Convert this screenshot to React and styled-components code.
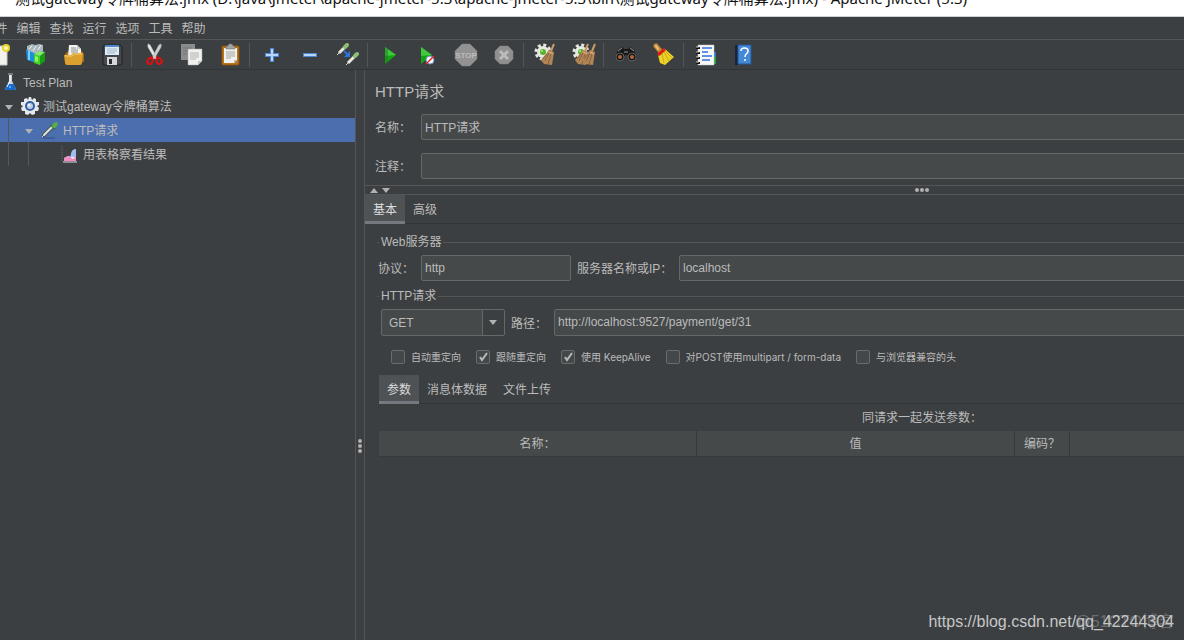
import React, { useState } from 'react';
import styled, { createGlobalStyle } from 'styled-components';

const GlobalStyle = createGlobalStyle`
    * {
        box-sizing: border-box;
    }

    body {
        margin: 0;
        background: #3c3f41;
        color: #bbbbbb;
        font: 12px/16px 'Liberation Sans', 'Noto Sans CJK SC', sans-serif;
    }

    button,
    input,
    select {
        margin: 0;
        color: inherit;
        font: inherit;
    }
`;

const Window = styled.div`
    position: relative;
    display: flex;
    flex-direction: column;
    height: 100vh;
    overflow: hidden;
`;

const TitleBar = styled.header`
    display: flex;
    flex: none;
    align-items: flex-start;
    height: 17px;
    padding-left: 15px;
    overflow: hidden;
    background: #ffffff;
    border-bottom: 1px solid #d0d0d0;
    color: #111111;
    font: 15px/20px 'Noto Sans', 'Noto Sans CJK SC', sans-serif;
    white-space: nowrap;

    span {
        margin-top: -12px;
    }
`;

const MenuBar = styled.nav`
    display: flex;
    flex: none;
    height: 23px;
    margin-left: -21px;
    border-bottom: 1px solid #555555;
`;

const MenuButton = styled.button`
    width: 33px;
    padding: 1px 0 0;
    border: 0;
    background: none;
    white-space: nowrap;
`;

const ToolBar = styled.div`
    display: flex;
    flex: none;
    align-items: center;
    height: 30px;
    padding: 1px 8px 0 0;
    border-bottom: 1px solid #323537;
`;

const ToolGroup = styled.div`
    display: flex;
    flex: none;

    &:first-child {
        margin-left: -21px;
    }

    & + & {
        padding-left: 3px;
        border-left: 1px solid #515658;
    }
`;

const ToolButton = styled.button`
    display: flex;
    align-items: center;
    justify-content: center;
    width: 38px;
    height: 24px;
    padding: 0;
    border: 0;
    background: none;
`;

const Body = styled.div`
    display: flex;
    flex: none;
    height: calc(100% + 112px);
`;

const TreePane = styled.aside`
    flex: none;
    width: 355px;
`;

const TreeRow = styled.div`
    display: flex;
    align-items: center;
    height: 24px;
    padding-left: 1px;
    background: ${(props) => (props.$selected ? '#4b6eaf' : 'transparent')};
    white-space: nowrap;

    svg {
        flex: none;
    }
`;

const TreeGuide = styled.span`
    align-self: stretch;
    width: 20px;
    padding-left: 7px;

    &::before {
        content: '';
        display: block;
        width: 1px;
        height: 100%;
        background: #54585a;
    }
`;

const TreeToggle = styled.button`
    display: flex;
    align-items: center;
    width: 20px;
    height: 24px;
    padding: 2px 0 0 4px;
    border: 0;
    background: none;
`;

const TreeSpacer = styled.span`
    width: 20px;
`;

const TreeLabel = styled.span`
    margin-left: 4px;
    padding-top: 2px;
`;

const SplitBar = styled.div`
    display: flex;
    flex: none;
    align-items: center;
    justify-content: center;
    flex-direction: ${(props) => (props.$vertical ? 'column' : 'row')};
    width: ${(props) => (props.$vertical ? '10px' : 'auto')};
    height: ${(props) => (props.$vertical ? 'auto' : '10px')};
    border: solid #555555;
    border-width: ${(props) => (props.$vertical ? '0 1px' : '1px 0')};
    gap: 1px;
`;

const Dot = styled.span`
    width: 4px;
    height: 4px;
    border-radius: 50%;
    background: #afb1b3;
`;

const SplitArrows = styled.div`
    display: flex;
    flex: 1;
    gap: 4px;
    padding-left: 5px;
`;

const SplitEnd = styled.div`
    flex: 1;
`;

/* The editor runs past the right edge of the visible window area. */
const Editor = styled.main`
    flex: none;
    width: calc(100% - 76px);
`;

const ElementForm = styled.div`
    display: flex;
    flex-direction: column;
    gap: 13px;
    height: 115px;
    padding: 12px 0 0 10px;
`;

const ElementTitle = styled.h1`
    height: 19px;
    margin: 0;
    font-size: 15px;
    font-weight: 400;
    line-height: 19px;
`;

const FormRow = styled.div`
    display: flex;
    align-items: center;

    label {
        flex: none;
        width: ${(props) => props.$labelWidth || '46px'};
        padding-top: 2px;
        white-space: nowrap;
    }
`;

const TextInput = styled.input`
    flex: ${(props) => (props.$width ? 'none' : '1')};
    width: ${(props) => props.$width || 'auto'};
    min-width: 0;
    height: ${(props) => (props.$tall ? '27px' : '26px')};
    padding: 0 3px 1px;
    border: 1px solid #646867;
    border-radius: 2px;
    background: #45494a;
    outline: none;
`;

const TabList = styled.div`
    display: flex;
    height: 29px;
    border-bottom: 1px solid #333638;
`;

const Tab = styled.button`
    height: 29px;
    padding: 3px 8px 0;
    border: 0;
    border-bottom: 3px solid ${(props) => (props.$active ? '#747a80' : 'transparent')};
    background: ${(props) => (props.$active ? '#4e5254' : 'transparent')};
    color: ${(props) => (props.$active ? '#dddddd' : '#bbbbbb')};
    white-space: nowrap;
`;

const SamplerPanel = styled.div`
    padding: 10px 16px 0 12px;
`;

const Group = styled.section`
    margin-bottom: 7px;
`;

const GroupTitle = styled.h2`
    display: flex;
    align-items: center;
    gap: 2px;
    height: 16px;
    margin: 0 0 5px;
    font-size: 12px;
    font-weight: 400;

    &::before,
    &::after {
        content: '';
        width: 2px;
        height: 1px;
        background: #555555;
    }

    &::after {
        flex: 1;
    }
`;

const FieldLine = styled.div`
    display: flex;
    align-items: center;
    gap: 6px;
    padding-left: ${(props) => props.$indent};
`;

const GroupField = styled(FormRow)`
    flex: ${(props) => (props.$grow ? '1' : 'none')};
`;

const SelectBox = styled.div`
    position: relative;
    width: 124px;

    select {
        width: 100%;
        height: 27px;
        padding: 0 30px 0 7px;
        border: 1px solid #646867;
        border-radius: 2px;
        background: linear-gradient(to left, #3c3f41 21px, #646867 21px, #646867 22px, #45494a 22px);
        appearance: none;
        outline: none;
    }

    svg {
        position: absolute;
        top: 11px;
        right: 8px;
        pointer-events: none;
    }
`;

const CheckLine = styled.div`
    display: flex;
    gap: 15px;
    height: 14px;
    margin: 14px 0 11px 14px;
`;

const CheckLabel = styled.label`
    display: flex;
    align-items: center;
    gap: 6px;
    font-family: Inter, 'Noto Sans CJK SC', sans-serif;
    font-size: 10px;
    line-height: 14px;
    white-space: nowrap;
`;

const CheckBox = styled.span`
    position: relative;
    display: flex;

    input {
        width: 14px;
        height: 14px;
        border: 1px solid #6b6b6b;
        border-radius: 2px;
        background: #43494a;
        appearance: none;
    }

    svg {
        position: absolute;
        inset: 0;
        visibility: hidden;
        pointer-events: none;
    }

    input:checked + svg {
        visibility: visible;
    }
`;

const ParamsPanel = styled.div`
    padding-left: 2px;
`;

const ParamsTable = styled.table`
    width: 100%;
    border-spacing: 0;
    table-layout: fixed;

    caption {
        height: 27px;
        padding-left: 8px;
        line-height: 29px;
    }

    th {
        height: 26px;
        padding: 1px 0 0;
        border-right: 1px solid #36393b;
        border-bottom: 1px solid #36393b;
        background: #45494a;
        font-weight: 400;
    }
`;

const Watermark = styled.div`
    position: absolute;
    right: 10px;
    bottom: 8px;
    color: ${(props) => (props.$faint ? '#6a6d6f' : '#c6c7c8')};
    font-size: 16px;
    line-height: 20px;
    white-space: nowrap;
`;

const Icon = ({ size = 24, children }) => (
    <svg width={size} height={size} viewBox={`0 0 ${size} ${size}`} fill="none" aria-hidden="true">
        {children}
    </svg>
);

const ArrowIcon = ({ up }) => (
    <svg width="8" height="5" viewBox="0 0 8 5" aria-hidden="true">
        <path d={up ? 'M0 5 4 0l4 5z' : 'M0 0h8L4 5z'} fill="#afb1b3" />
    </svg>
);

const NewIcon = () => (
    <Icon>
        <path d="M4 3h17v19H4z" fill="#f1f1ee" stroke="#c9c9c4" />
        <circle cx="20" cy="5" r="3" fill="#fff8a8" stroke="#e6d432" strokeWidth="2" />
    </Icon>
);

const TemplatesIcon = () => (
    <Icon>
        <path d="M2 7l7-2 6 3v13L3 17z" fill="#1c8fd6" />
        <path d="M3 3l5-2 3 1 4-1 4 1v6l-7 3-9-4z" fill="#a9b8bf" />
        <path d="M5 6l3-3M9 8l3-5M14 7l3-5" stroke="#e9f1f4" />
        <path d="M5 8v9" stroke="#6fd0ff" strokeWidth="2" />
        <path d="M10 11l6 2v9l-6-2z" fill="#42d327" />
        <path d="M16 13l5-4v9l-5 4z" fill="#179c14" />
        <path d="M10 11l6-3 5 1-5 4z" fill="#86e96c" />
        <path d="M11 13l3 1v5l-3-1z" fill="#8af46e" />
    </Icon>
);

const OpenIcon = () => (
    <Icon>
        <path d="M3 11l3-3h14l2 3v8H3z" fill="#a26b10" />
        <path d="M7 2h8l4 4v8H6z" fill="#f2f2f0" />
        <path d="M9 5h5M9 7h7M9 9h7" stroke="#8e8e8e" />
        <path d="M15 2l4 4h-4z" fill="#c9c9c9" />
        <path d="M2 12h7l2-2h10l-1 10c0 1-1 2-2 2H5c-1 0-2-1-2-2z" fill="#dca02f" />
        <path d="M3 13h7l2-2h8" stroke="#f4cd77" />
    </Icon>
);

const SaveIcon = () => (
    <Icon>
        <path d="M3 3l1-1h16l2 2v17l-1 1H4l-1-1z" fill="#44484c" stroke="#1f2122" />
        <path d="M5 2h14v10H5z" fill="#dcebf8" />
        <path d="M5 2h14v2H5z" fill="#5288c7" />
        <path d="M7 6h10M7 8h10M7 10h8" stroke="#a6b8c8" />
        <path d="M7 14h10v8H7z" fill="#d6d7d8" />
        <path d="M9 16h3v5H9z" fill="#2b2d2f" />
    </Icon>
);

const CutIcon = () => (
    <Icon>
        <path d="M6 1l2 1 7 13-2 1L6 4z" fill="#e7e8e9" stroke="#cccfd0" strokeWidth=".7" />
        <path d="M19 1l-2 1-7 13 2 1 7-12z" fill="#cfd1d2" stroke="#b8bbbd" strokeWidth=".7" />
        <path d="M11 14l-2 1M14 14l2 1" stroke="#e01010" strokeWidth="2" />
        <ellipse cx="8" cy="18" rx="2.5" ry="3" stroke="#e01010" strokeWidth="2" transform="rotate(30 8 18)" />
        <ellipse cx="17" cy="18" rx="2.5" ry="3" stroke="#e01010" strokeWidth="2" transform="rotate(-30 17 18)" />
    </Icon>
);

const CopyIcon = () => (
    <Icon>
        <path d="M1 1h14v16H1z" fill="#8a8c8d" />
        <path d="M3 5h9M3 8h9M3 11h4" stroke="#707374" />
        <path d="M8 6h14v12l-4 4H8z" fill="#f0f0ee" stroke="#a8a8a4" strokeWidth=".5" />
        <path d="M10 10h9M10 12h9M10 14h9M10 16h6" stroke="#b2b2af" />
        <path d="M18 22v-4h4z" fill="#c2c2bf" />
    </Icon>
);

const PasteIcon = () => (
    <Icon>
        <rect x="4" y="3" width="17" height="19" rx="1" fill="#b9741c" stroke="#8a520c" />
        <path d="M6 5h13v12l-3 3H6z" fill="#f0f0ee" />
        <path d="M8 9h9M8 11h9M8 13h9M8 15h5" stroke="#a5a5a2" />
        <path d="M16 20v-3h3z" fill="#bcbcb8" />
        <path d="M8 6V3h2c0-3 5-3 5 0h2v3z" fill="#a3a5a3" stroke="#5d5f5e" strokeWidth=".5" />
    </Icon>
);

const AddIcon = () => (
    <Icon>
        <path d="M12 5v14M5 12h14" stroke="#4f86d2" strokeWidth="4" />
        <path d="M12 6v12M6 12h12" stroke="#b7d6f7" strokeWidth="2" />
    </Icon>
);

const RemoveIcon = () => (
    <Icon>
        <path d="M5 12h14" stroke="#4f86d2" strokeWidth="4" />
        <path d="M6 12h12" stroke="#b7d6f7" strokeWidth="2" />
    </Icon>
);

const ToggleIcon = () => (
    <Icon>
        <path d="M3 10l6-6M12 20l6-6" stroke="#e8e8df" strokeWidth="3" />
        <path d="M9 4l2-2M19 13l2-2" stroke="#8cbf74" strokeWidth="4" strokeLinecap="round" />
        <path d="M1 12l2-2M10 22l2-2" stroke="#d8d8d0" />
        <path d="M8 8l4 4" stroke="#2f74dc" strokeWidth="2" />
        <path d="M14 8v6H8z" fill="#2f74dc" />
    </Icon>
);

const StartIcon = () => (
    <Icon>
        <path d="M7 4l11 8-11 9z" fill="#12a512" />
        <path d="M7 4l11 8-11 1z" fill="#3fc93b" />
        <path d="M7 4v17l3-2V6z" fill="#1c7c1c" opacity=".5" />
    </Icon>
);

const StartNoTimersIcon = () => (
    <Icon>
        <path d="M5 4l11 8-11 9z" fill="#12a512" />
        <path d="M5 4l11 8-11 1z" fill="#3fc93b" />
        <circle cx="14" cy="17" r="4" fill="#f5f7fa" stroke="#6f92c4" />
        <path d="M10 21l8-8" stroke="#dd2222" strokeWidth="1.5" />
    </Icon>
);

const StopIcon = () => (
    <Icon>
        <path d="M8 1h8l7 7v8l-7 7H8l-7-7V8z" fill="#929292" stroke="#7d7d7d" strokeWidth=".5" />
        <text x="12" y="15" fill="#bdbdbd" fontSize="8" fontWeight="700" textAnchor="middle">
            STOP
        </text>
    </Icon>
);

const ShutdownIcon = () => (
    <Icon>
        <path d="M8 3h8l5 5v8l-5 5H8l-5-5V8z" fill="#909090" stroke="#808080" strokeWidth=".5" />
        <path d="M8 8l8 8M16 8l-8 8" stroke="#bcbcbc" strokeWidth="3" />
    </Icon>
);

const Gear = () => (
    <>
        <circle cx="9" cy="9" r="7" stroke="#e4e4e0" strokeWidth="3" strokeDasharray="3 2.5" />
        <circle cx="9" cy="9" r="6" fill="#e8e8e3" />
        <circle cx="9" cy="9" r="3" fill="#55b42a" />
        <circle cx="8" cy="8" r="1" fill="#a9e58a" />
    </>
);

const Broom = () => (
    <>
        <path d="M17 8l3-7" stroke="#c79b64" strokeWidth="2" />
        <path d="M15 7l5 2-2 13-8-1-3-4z" fill="#b28556" />
        <path d="M15 10l-4 8M17 11l-3 10M13 11l-4 5" stroke="#755130" strokeWidth=".7" />
        <path d="M15 9l4 2" stroke="#e2bb87" />
    </>
);

const ClearIcon = () => (
    <Icon>
        <Gear />
        <Broom />
    </Icon>
);

const ClearAllIcon = () => (
    <Icon>
        <Gear />
        <g transform="translate(-4 0)">
            <Broom />
        </g>
        <g transform="translate(3 0)">
            <Broom />
        </g>
    </Icon>
);

const SearchIcon = () => (
    <Icon>
        <path d="M4 7l4-3 2 2h4l2-2 4 3 3 8h-8l-2-3h-2l-2 3H1z" fill="#191919" />
        <path d="M4 8l4-3M16 5l4 3M10 9h4" stroke="#979797" />
        <circle cx="6" cy="14" r="4" fill="#161616" stroke="#5f5f5f" />
        <circle cx="18" cy="14" r="4" fill="#161616" stroke="#5f5f5f" />
        <circle cx="6" cy="14" r="2" fill="#b0683a" />
        <circle cx="18" cy="14" r="2" fill="#b0683a" />
    </Icon>
);

const ResetIcon = () => (
    <Icon>
        <path d="M4 3l5 6" stroke="#c78a36" strokeWidth="5" strokeLinecap="round" />
        <path d="M4 3l2 3" stroke="#ecc07c" strokeWidth="2" strokeLinecap="round" />
        <path d="M6 12l7-6 9 8-9 8-5-2z" fill="#ecd226" />
        <path d="M10 11l2 9M12 9l5 9M14 9l6 6" stroke="#c9aa18" />
        <path d="M6 12l7-6" stroke="#d72116" strokeWidth="3" />
    </Icon>
);

const FunctionIcon = () => (
    <Icon>
        <path d="M20 9h2v5h-2z" fill="#237ed8" />
        <path d="M20 14h2v7h-2z" fill="#21a83b" />
        <path d="M4 2h16v20H4z" fill="#f8f8f8" stroke="#c6c6c6" strokeWidth=".5" />
        <path d="M8 5h10M8 9h6M8 13h10M8 17h8" stroke="#2f6ddd" strokeWidth="1.5" />
        <path d="M2 5h4M2 10h4M2 15h4M2 20h4" stroke="#171717" strokeWidth="2" />
        <path d="M2 4h3M2 9h3M2 14h3M2 19h3" stroke="#c4c4c4" />
    </Icon>
);

const HelpIcon = () => (
    <Icon>
        <path d="M3 2h3v20H3z" fill="#192536" />
        <path d="M6 2h13v19H6z" fill="#4488d8" stroke="#245895" />
        <path d="M9 8c0-4 7-4 7 0 0 3-3 2-3 6" stroke="#ffffff" strokeWidth="1.5" />
        <circle cx="13" cy="17" r="1" fill="#ffffff" />
    </Icon>
);

const FlaskIcon = () => (
    <Icon size={18}>
        <path d="M8 2h3v6l4 8-1 1H5l-1-1 4-8z" fill="#c3d3e3" />
        <path d="M6 11h7l2 5-1 1H5l-1-1z" fill="#1769cc" />
        <path d="M9 2v6l-3 6" stroke="#ffffff" />
        <circle cx="9" cy="14" r="1" fill="#78bfff" />
        <path d="M7 1h5" stroke="#a9b4bf" />
    </Icon>
);

const ThreadGroupIcon = () => (
    <Icon size={18}>
        <path
            d="M8 0h2l1 3 2-2 2 1v3h3v3l-2 1 2 2-1 3h-3v3l-3 1-2-2-2 2-3-1v-3H1l-1-3 2-2-2-1V5h3V2l3-1 1 2z"
            fill="#e5e9ee"
        />
        <circle cx="9" cy="9" r="5" fill="#365f9f" />
        <circle cx="9" cy="9" r="3" fill="#bfd2ea" />
        <circle cx="8" cy="8" r="1" fill="#ffffff" />
    </Icon>
);

const SamplerIcon = () => (
    <Icon size={18}>
        <path d="M3 14l8-8" stroke="#4a5560" strokeWidth="4" strokeLinecap="round" />
        <path d="M3 14l8-8" stroke="#dfe4dc" strokeWidth="2" strokeLinecap="round" />
        <path d="M10 4l4 4" stroke="#317b31" strokeWidth="2" />
        <path d="M13 5l2-2" stroke="#5bab48" strokeWidth="4" strokeLinecap="round" />
        <path d="M1 16l2-2" stroke="#cfd4cf" />
        <path d="M2 17h12" stroke="#344e80" />
    </Icon>
);

const ListenerIcon = () => (
    <Icon size={18}>
        <path d="M1 1v16" stroke="#66696b" strokeDasharray="1 1" />
        <path d="M3 16v-3l4-2 3 1 1-6 3-2 1 1v11z" fill="#f0f0fa" />
        <path d="M9 12l2-6 3-2 1 1v7z" fill="#a3bdf0" />
        <path d="M3 16v-3l5-2 4 3 3-3v5z" fill="#f08cc6" />
        <path d="M2 17h14" stroke="#e7dce6" />
    </Icon>
);

const CheckIcon = () => (
    <Icon size={14}>
        <path d="M4 7l2 3 5-7" stroke="#b9b9b9" strokeWidth="2" />
    </Icon>
);

const menus = ['文件', '编辑', '查找', '运行', '选项', '工具', '帮助'];

const tools = [
    [
        ['新建', NewIcon],
        ['模板', TemplatesIcon],
        ['打开', OpenIcon],
        ['保存', SaveIcon],
    ],
    [
        ['剪切', CutIcon],
        ['复制', CopyIcon],
        ['粘贴', PasteIcon],
    ],
    [
        ['展开', AddIcon],
        ['折叠', RemoveIcon],
        ['切换', ToggleIcon],
    ],
    [
        ['启动', StartIcon],
        ['不停顿启动', StartNoTimersIcon],
        ['停止', StopIcon],
        ['关闭', ShutdownIcon],
    ],
    [
        ['清除', ClearIcon],
        ['清除全部', ClearAllIcon],
    ],
    [
        ['搜索', SearchIcon],
        ['重置搜索', ResetIcon],
    ],
    [
        ['函数助手', FunctionIcon],
        ['帮助主题', HelpIcon],
    ],
];

const treeNodes = [
    { label: 'Test Plan', icon: FlaskIcon, root: true },
    { label: '测试gateway令牌桶算法', icon: ThreadGroupIcon, depth: 0, open: true },
    { label: 'HTTP请求', icon: SamplerIcon, depth: 1, open: true },
    { label: '用表格察看结果', icon: ListenerIcon, depth: 2 },
];

const options = [
    ['自动重定向', false],
    ['跟随重定向', true],
    ['使用 KeepAlive', true],
    ['对POST使用multipart / form-data', false],
    ['与浏览器兼容的头', false],
];

function Tabs({ names }) {
    const [active, setActive] = useState(names[0]);

    return (
        <TabList role="tablist">
            {names.map((name) => (
                <Tab
                    key={name}
                    role="tab"
                    aria-selected={active === name}
                    $active={active === name}
                    onClick={() => setActive(name)}
                >
                    {name}
                </Tab>
            ))}
        </TabList>
    );
}

function Tree() {
    const [selected, setSelected] = useState('HTTP请求');

    return (
        <TreePane role="tree">
            {treeNodes.map(({ label, icon: NodeIcon, root, depth = 0, open }) => (
                <TreeRow
                    key={label}
                    role="treeitem"
                    aria-selected={selected === label}
                    $selected={selected === label}
                    onClick={() => setSelected(label)}
                >
                    {Array.from({ length: depth }, (_, i) => (
                        <TreeGuide key={i} />
                    ))}
                    {open && (
                        <TreeToggle aria-label="折叠">
                            <ArrowIcon />
                        </TreeToggle>
                    )}
                    {!open && !root && <TreeSpacer />}
                    <NodeIcon />
                    <TreeLabel>{label}</TreeLabel>
                </TreeRow>
            ))}
        </TreePane>
    );
}

function HttpSampler() {
    return (
        <SamplerPanel>
            <Group>
                <GroupTitle>Web服务器</GroupTitle>
                <FieldLine $indent="1px">
                    <GroupField $labelWidth="43px">
                        <label htmlFor="protocol">协议：</label>
                        <TextInput id="protocol" $width="150px" defaultValue="http" />
                    </GroupField>
                    <GroupField $grow $labelWidth="102px">
                        <label htmlFor="server">服务器名称或IP：</label>
                        <TextInput id="server" defaultValue="localhost" />
                    </GroupField>
                </FieldLine>
            </Group>
            <Group>
                <GroupTitle>HTTP请求</GroupTitle>
                <FieldLine $indent="4px">
                    <SelectBox>
                        <select aria-label="方法" defaultValue="GET">
                            <option>GET</option>
                        </select>
                        <ArrowIcon />
                    </SelectBox>
                    <GroupField $grow $labelWidth="43px">
                        <label htmlFor="path">路径：</label>
                        <TextInput id="path" $tall defaultValue="http://localhost:9527/payment/get/31" />
                    </GroupField>
                </FieldLine>
                <CheckLine>
                    {options.map(([name, checked]) => (
                        <CheckLabel key={name}>
                            <CheckBox>
                                <input type="checkbox" defaultChecked={checked} />
                                <CheckIcon />
                            </CheckBox>
                            {name}
                        </CheckLabel>
                    ))}
                </CheckLine>
                <ParamsPanel>
                    <Tabs names={['参数', '消息体数据', '文件上传']} />
                    <ParamsTable>
                        <caption>同请求一起发送参数：</caption>
                        <colgroup>
                            <col width="318" />
                            <col width="318" />
                            <col width="55" />
                            <col />
                        </colgroup>
                        <thead>
                            <tr>
                                <th>名称：</th>
                                <th>值</th>
                                <th>编码？</th>
                                <th />
                            </tr>
                        </thead>
                    </ParamsTable>
                </ParamsPanel>
            </Group>
        </SamplerPanel>
    );
}

function App() {
    return (
        <Window>
            <GlobalStyle />
            <TitleBar>
                <span>
                    {
                        '测试gateway令牌桶算法.jmx (D:\\java\\Jmeter\\apache-jmeter-5.3\\apache-jmeter-5.3\\bin\\测试gateway令牌桶算法.jmx) - Apache JMeter (5.3)'
                    }
                </span>
            </TitleBar>
            <MenuBar>
                {menus.map((name) => (
                    <MenuButton key={name}>{name}</MenuButton>
                ))}
            </MenuBar>
            <ToolBar role="toolbar">
                {tools.map((group, i) => (
                    <ToolGroup key={i}>
                        {group.map(([name, ToolIcon]) => (
                            <ToolButton key={name} aria-label={name}>
                                <ToolIcon />
                            </ToolButton>
                        ))}
                    </ToolGroup>
                ))}
            </ToolBar>
            <Body>
                <Tree />
                <SplitBar $vertical>
                    <Dot />
                    <Dot />
                    <Dot />
                </SplitBar>
                <Editor>
                    <ElementForm>
                        <ElementTitle>HTTP请求</ElementTitle>
                        <FormRow>
                            <label htmlFor="name">名称：</label>
                            <TextInput id="name" defaultValue="HTTP请求" />
                        </FormRow>
                        <FormRow>
                            <label htmlFor="comments">注释：</label>
                            <TextInput id="comments" />
                        </FormRow>
                    </ElementForm>
                    <SplitBar>
                        <SplitArrows>
                            <ArrowIcon up />
                            <ArrowIcon />
                        </SplitArrows>
                        <Dot />
                        <Dot />
                        <Dot />
                        <SplitEnd />
                    </SplitBar>
                    <Tabs names={['基本', '高级']} />
                    <HttpSampler />
                </Editor>
            </Body>
            <Watermark $faint>@51CTO博客</Watermark>
            <Watermark>https://blog.csdn.net/qq_42244304</Watermark>
        </Window>
    );
}

export default App;
